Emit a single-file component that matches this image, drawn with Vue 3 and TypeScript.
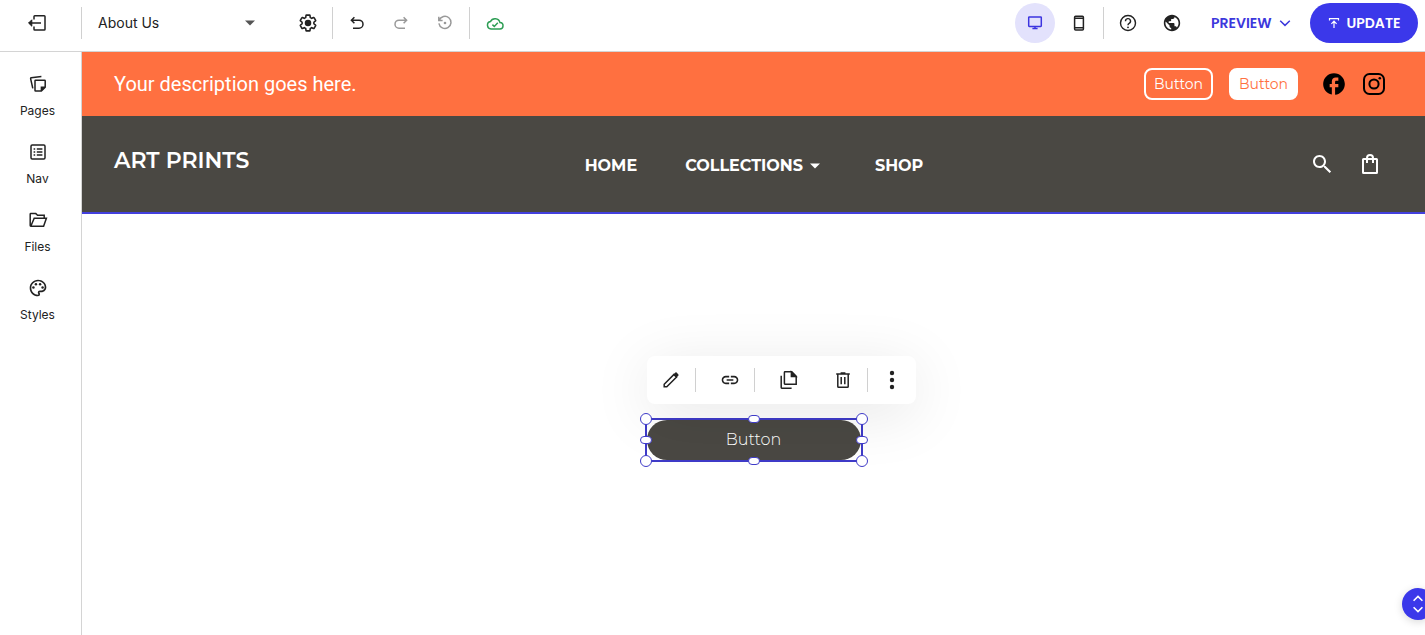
<script setup lang="ts">
import { ref } from 'vue'

type Device = 'desktop' | 'mobile'

const pages: string[] = ['About Us', 'Home', 'Contact']
const page = ref<string>('About Us')
const device = ref<Device>('desktop')
const handles: string[] = ['nw', 'n', 'ne', 'w', 'e', 'sw', 's', 'se']
</script>

<template>
  <div class="editor">
    <header class="topbar">
      <div class="exit">
        <button class="tool" type="button" aria-label="Exit editor">
          <svg width="20" height="20" viewBox="0 0 20 20" class="line">
            <path d="M7 6.4V3.6Q7 2.8 7.8 2.8H17.2Q18 2.8 18 3.6V16.2Q18 17 17.2 17H7.8Q7 17 7 16.2V13.4" />
            <path d="M1.8 10H14" />
            <path d="M4.8 6.8 1.6 10l3.2 3.2z" fill="currentColor" stroke-width="1" />
          </svg>
        </button>
      </div>
      <span class="divider"></span>
      <div class="page-picker">
        <select v-model="page" aria-label="Page">
          <option v-for="name in pages" :key="name">{{ name }}</option>
        </select>
        <svg class="caret" width="12" height="6" viewBox="0 0 12 6"><path d="M1 0.5h10L6 5.5z" fill="#555" /></svg>
      </div>
      <button class="tool settings" type="button" aria-label="Page settings">
        <svg width="20" height="20" viewBox="0 0 24 24">
          <path fill="none" stroke="currentColor" stroke-width="2" transform="translate(0.6 0.6) scale(.95)" d="M19.43 12.98c.04-.32.07-.64.07-.98s-.03-.66-.07-.98l2.11-1.65c.19-.15.24-.42.12-.64l-2-3.46c-.12-.22-.39-.3-.61-.22l-2.49 1c-.52-.4-1.08-.73-1.69-.98l-.38-2.65C14.46 2.18 14.25 2 14 2h-4c-.25 0-.46.18-.49.42l-.38 2.65c-.61.25-1.17.59-1.69.98l-2.49-1c-.23-.09-.49 0-.61.22l-2 3.46c-.13.22-.07.49.12.64l2.11 1.65c-.04.32-.07.65-.07.98s.03.66.07.98l-2.11 1.65c-.19.15-.24.42-.12.64l2 3.46c.12.22.39.3.61.22l2.49-1c.52.4 1.08.73 1.69.98l.38 2.65c.03.24.24.42.49.42h4c.25 0 .46-.18.49-.42l.38-2.65c.61-.25 1.17-.59 1.69-.98l2.49 1c.23.09.49 0 .61-.22l2-3.46c.12-.22.07-.49-.12-.64z" />
          <circle cx="12" cy="12" r="3.9" fill="currentColor" />
        </svg>
      </button>
      <span class="divider"></span>
      <div class="history">
        <button class="tool" type="button" aria-label="Undo">
          <svg width="20" height="20" viewBox="0 0 20 20" class="line">
            <path d="M7.4 4.2 4.4 7.2l3 3M4.6 7.2H12a4 4 0 0 1 0 8H6" />
          </svg>
        </button>
        <button class="tool muted" type="button" aria-label="Redo">
          <svg width="20" height="20" viewBox="0 0 20 20" class="line">
            <path d="M12.6 4.2l3 3-3 3M15.4 7.2H8a4 4 0 0 0 0 8h6" />
          </svg>
        </button>
        <button class="tool muted" type="button" aria-label="Version history">
          <svg width="20" height="20" viewBox="0 0 20 20" class="line">
            <path d="M4.2 7.2A6.1 6.1 0 1 1 3.9 10.4M3.8 3.8v3.6h3.8" />
            <circle cx="10" cy="10" r="1.3" fill="currentColor" stroke="none" />
          </svg>
        </button>
      </div>
      <span class="divider"></span>
      <button class="tool saved" type="button" aria-label="All changes saved">
        <svg width="20" height="20" viewBox="0 0 20 20" class="line">
          <path d="M6 16H14.6A3.2 3.2 0 0 0 15 9.6 5.1 5.1 0 0 0 5.4 8.6 3.75 3.75 0 0 0 6 16Z" />
          <path d="m7.4 11.6 1.9 1.8 3.5-3.6" />
        </svg>
      </button>

      <div class="spacer"></div>

      <button class="device" :class="{ active: device === 'desktop' }" type="button" aria-label="Desktop view" @click="device = 'desktop'">
        <svg width="20" height="20" viewBox="0 0 20 20" class="line">
          <rect x="3.7" y="4" width="12.6" height="9.4" rx="0.6" />
          <path d="M10 13.6v2M7.4 15.4h5.2" />
        </svg>
      </button>
      <button class="device phone" :class="{ active: device === 'mobile' }" type="button" aria-label="Mobile view" @click="device = 'mobile'">
        <svg width="20" height="20" viewBox="0 0 20 20" class="line">
          <rect x="5.6" y="3.2" width="8.8" height="13.8" rx="1" />
          <path d="M6 5.2h8M6 14.8h8" />
        </svg>
      </button>
      <span class="divider"></span>
      <div class="support">
        <button class="tool" type="button" aria-label="Help">
          <svg width="20" height="20" viewBox="0 0 24 24" fill="none" stroke="currentColor" stroke-width="1.7">
            <circle cx="12" cy="12" r="9" />
            <path d="M9 9.8A3 3 0 1 1 13.4 12.4Q12 13.2 12 14.8" />
            <circle cx="12" cy="17.2" r="1.1" fill="currentColor" stroke="none" />
          </svg>
        </button>
        <button class="tool" type="button" aria-label="Language">
          <svg width="18" height="20" viewBox="1 0 22 24" fill="currentColor">
            <path d="M12 2C6.48 2 2 6.48 2 12s4.48 10 10 10 10-4.48 10-10S17.52 2 12 2zm-1 17.93c-3.95-.49-7-3.85-7-7.93 0-.62.08-1.21.21-1.79L9 15v1c0 1.1.9 2 2 2v1.93zm6.9-2.54c-.26-.81-1-1.39-1.9-1.39h-1v-3c0-.55-.45-1-1-1H8v-2h2c.55 0 1-.45 1-1V7h2c1.1 0 2-.9 2-2v-.41c2.93 1.19 5 4.06 5 7.41 0 2.08-.8 3.97-2.1 5.39z" />
          </svg>
        </button>
      </div>
      <button class="preview" type="button">
        PREVIEW
        <svg width="12" height="12" viewBox="0 0 12 12" class="line"><path d="M1.2 3.8 6 8.4l4.8-4.6" /></svg>
      </button>
      <button class="update" type="button">
        <svg width="12" height="12" viewBox="0 0 12 12" fill="none" stroke="#fff" stroke-width="1.2"><path d="M1.5 3.4V1.6h9v1.8M6 11V4.4M3.4 6.8 6 4.2l2.6 2.6" /></svg>
        UPDATE
      </button>
    </header>

    <div class="body">
      <nav class="sidebar" aria-label="Editor">
        <button class="side-item" type="button">
          <svg width="20" height="20" viewBox="0 0 20 20" class="line">
            <path d="M7.6 6.2H16.6Q17.2 6.2 17.2 6.8V13.2L13.4 17H7.6Q7 17 7 16.4V6.8Q7 6.2 7.6 6.2ZM13.4 16.8V13.2H17" />
            <path d="M4.8 14.4 2.6 4.6Q2.5 3.9 3.2 3.7L13.4 2.4" />
            <path d="M13.6 13.4h3.2l-3.2 3.2z" fill="currentColor" stroke="none" />
          </svg>
          Pages
        </button>
        <button class="side-item" type="button">
          <svg width="20" height="20" viewBox="0 0 20 20" class="line">
            <rect x="3" y="3" width="14" height="14" rx="1.2" />
            <path d="M5.6 7h1.6M8.8 7h5.6M5.6 10h1.6M8.8 10h5.6M5.6 13h1.6M8.8 13h5.6" />
          </svg>
          Nav
        </button>
        <button class="side-item" type="button">
          <svg width="20" height="20" viewBox="0 0 20 20" class="line">
            <path d="M16.2 7.4V5.2H9.6L7.8 3.6H2.8Q2.2 3.6 2.2 4.2V15.6Q2.2 16.2 2.8 16.2H15.6L18.4 8.2H6.2L3 15.8" />
          </svg>
          Files
        </button>
        <button class="side-item" type="button">
          <svg width="20" height="20" viewBox="0 0 24 24" fill="currentColor">
            <path d="M12 22C6.49 22 2 17.51 2 12S6.49 2 12 2s10 4.04 10 9c0 3.31-2.69 6-6 6h-1.77c-.28 0-.5.22-.5.5 0 .12.05.23.13.33.41.47.64 1.06.64 1.67A2.5 2.5 0 0 1 12 22zm0-18c-4.41 0-8 3.59-8 8s3.59 8 8 8c.28 0 .5-.22.5-.5a.54.54 0 0 0-.14-.35c-.41-.46-.63-1.05-.63-1.65a2.5 2.5 0 0 1 2.5-2.5H16c2.21 0 4-1.79 4-4 0-3.86-3.59-7-8-7z" />
            <circle cx="6.5" cy="11.5" r="1.5" /><circle cx="9.5" cy="7.5" r="1.5" />
            <circle cx="14.5" cy="7.5" r="1.5" /><circle cx="17.5" cy="11.5" r="1.5" />
          </svg>
          Styles
        </button>
      </nav>

      <main class="site">
        <section class="banner">
          <p>Your description goes here.</p>
          <div class="banner-actions">
            <button class="outlined" type="button">Button</button>
            <button class="filled" type="button">Button</button>
          </div>
          <div class="social">
            <a href="#" aria-label="Facebook">
              <svg width="26" height="26" viewBox="0 0 24 24">
                <path d="M22 12c0-5.52-4.48-10-10-10S2 6.48 2 12c0 4.84 3.44 8.87 8 9.8V15H8v-3h2V9.5C10 7.57 11.57 6 13.5 6H16v3h-2c-.55 0-1 .45-1 1v2h3v3h-3v6.95c5.05-.5 9-4.76 9-9.95z" />
              </svg>
            </a>
            <a href="#" aria-label="Instagram">
              <svg width="26" height="26" viewBox="0 0 26 26" fill="none" stroke="#000" stroke-width="2">
                <rect x="3" y="3" width="20" height="20" rx="5.5" />
                <circle cx="13" cy="13" r="4.6" />
                <circle cx="18.8" cy="7.2" r="1.3" fill="#000" stroke="none" />
              </svg>
            </a>
          </div>
        </section>

        <section class="site-header">
          <a class="brand" href="#">ART PRINTS</a>
          <nav class="menu" aria-label="Site">
            <a href="#">HOME</a>
            <a class="with-caret" href="#">COLLECTIONS
              <svg width="10" height="6" viewBox="0 0 10 6"><path d="M0 0.5h10L5 5.5z" fill="#fff" /></svg>
            </a>
            <a href="#">SHOP</a>
          </nav>
          <div class="site-tools">
            <button class="tool" type="button" aria-label="Search">
              <svg width="24" height="24" viewBox="0 0 24 24" fill="#fff">
                <path d="M15.5 14h-.79l-.28-.27C15.41 12.59 16 11.11 16 9.5 16 5.91 13.09 3 9.5 3S3 5.91 3 9.5 5.91 16 9.5 16c1.61 0 3.09-.59 4.23-1.57l.27.28v.79l5.6 5.6L21.1 19.6l-5.6-5.6zm-6 0C7.01 14 5 11.99 5 9.5S7.01 5 9.5 5 14 7.01 14 9.5 11.99 14 9.5 14z" />
              </svg>
            </button>
            <button class="tool" type="button" aria-label="Shopping bag">
              <svg width="24" height="24" viewBox="0 0 24 24" fill="none" stroke="#fff" stroke-width="2">
                <rect x="5" y="7" width="14" height="14" rx="0.5" />
                <path d="M9 11V6a3 3 0 0 1 6 0v5" />
              </svg>
            </button>
          </div>
        </section>

        <section class="canvas">
          <div class="selection">
            <div class="toolbar" role="toolbar" aria-label="Element actions">
              <button class="tool" type="button" aria-label="Edit">
                <svg width="20" height="20" viewBox="0 0 20 20" class="line">
                  <path d="M3.2 16.8v-2.6L13 4.4l2.6 2.6L5.8 16.8z" />
                  <path d="m12.2 4.8 2.2-2.2q.6-.5 1.2 0l1.8 1.8q.5.6 0 1.2l-2.2 2.2z" fill="currentColor" stroke="none" />
                </svg>
              </button>
              <span class="bar"></span>
              <button class="tool wide" type="button" aria-label="Link">
                <svg width="20" height="20" viewBox="0 0 24 24" fill="currentColor">
                  <path d="M3.9 12c0-1.71 1.39-3.1 3.1-3.1h4V7H7c-2.76 0-5 2.24-5 5s2.24 5 5 5h4v-1.9H7c-1.71 0-3.1-1.39-3.1-3.1zM8 13h8v-2H8v2zm9-6h-4v1.9h4c1.71 0 3.1 1.39 3.1 3.1s-1.39 3.1-3.1 3.1h-4V17h4c2.76 0 5-2.24 5-5s-2.24-5-5-5z" />
                </svg>
              </button>
              <span class="bar"></span>
              <button class="tool copy" type="button" aria-label="Duplicate">
                <svg width="20" height="20" viewBox="0 0 20 20" class="line">
                  <path d="M6 1.8h6.8l4.4 4.4v8H6Q5.4 14.2 5.4 13.6V2.4Q5.4 1.8 6 1.8Z" />
                  <path d="M12.4 2v4.6h4.6z" fill="currentColor" />
                  <path d="M2.2 5.8V17.6Q2.2 18.2 2.8 18.2H12.6" />
                </svg>
              </button>
              <button class="tool bin" type="button" aria-label="Delete">
                <svg width="20" height="20" viewBox="0 0 20 20" class="line">
                  <path d="M3.2 4h13.6M7.6 3h4.8M4.8 4.2v12.2q0 .8.8.8h8.8q.8 0 .8-.8V4.2M8.2 7v7.2M11.8 7v7.2" />
                </svg>
              </button>
              <span class="bar"></span>
              <button class="tool more" type="button" aria-label="More">
                <svg width="20" height="20" viewBox="0 0 20 20" fill="currentColor">
                  <circle cx="10" cy="3" r="2.2" /><circle cx="10" cy="10" r="2.2" /><circle cx="10" cy="17" r="2.2" />
                </svg>
              </button>
            </div>
            <button class="pill" type="button">Button</button>
            <span v-for="spot in handles" :key="spot" class="handle" :class="spot"></span>
          </div>
        </section>
      </main>
    </div>

    <button class="resize" type="button" aria-label="Move section">
      <svg width="20" height="20" viewBox="0 0 20 20" fill="none" stroke="#fff" stroke-width="1.6">
        <path d="m5.6 6.8 4.4-4.4 4.4 4.4M5.6 13.2l4.4 4.4 4.4-4.4" />
      </svg>
    </button>
  </div>
</template>

<style>
body {
  margin: 0;
}
</style>

<style scoped>
.editor {
  position: relative;
  display: flex;
  flex-direction: column;
  min-height: 100vh;
  overflow: hidden;
  background: #fff;
  color: #222;
  font-family: Inter, "Liberation Sans", sans-serif;
}
.editor *,
.editor {
  box-sizing: border-box;
}
button {
  margin: 0;
  padding: 0;
  border: 0;
  background: none;
  color: inherit;
  font-family: inherit;
  cursor: pointer;
}
a {
  color: inherit;
  text-decoration: none;
}
svg {
  display: block;
  flex: none;
}
.line {
  fill: none;
  stroke: currentColor;
  stroke-width: 1.5;
}
.tool {
  display: flex;
  flex: none;
  align-items: center;
  justify-content: center;
}
.muted {
  color: #999;
}

/* Top bar */
.topbar {
  display: flex;
  align-items: center;
  height: 52px;
  padding: 0 7px 5px 0;
  border-bottom: 1px solid #d4d4d4;
}
.exit {
  display: flex;
  width: 81px;
  padding-left: 27px;
}
.divider {
  flex: none;
  width: 1px;
  height: 32px;
  background: #d0d0d0;
}
.page-picker {
  position: relative;
  width: 174px;
  margin-left: 16px;
}
.page-picker select {
  width: 100%;
  height: 32px;
  padding: 0;
  border: 0;
  background: none;
  appearance: none;
  color: #222;
  font: 14px/20px Inter, sans-serif;
}
.caret {
  position: absolute;
  top: 13px;
  right: 16px;
  pointer-events: none;
}
.settings {
  margin: 0 14px 0 26px;
}
.history {
  display: flex;
  gap: 24px;
  padding: 0 14px;
}
.saved {
  margin-left: 15px;
  color: #2e9e55;
}
.spacer {
  flex: 1;
}
.device {
  display: flex;
  flex: none;
  align-items: center;
  justify-content: center;
  width: 40px;
  height: 40px;
  border-radius: 50%;
}
.device.active {
  background: #e3e2fc;
  color: #3c35e0;
}
.phone {
  margin: 0 4px;
}
.support {
  display: flex;
  gap: 25px;
  padding: 0 30px 0 14px;
}
.preview {
  display: flex;
  align-items: center;
  justify-content: space-between;
  width: 80px;
  margin-right: 19px;
  color: #3c38dc;
  font: 600 14px/20px Poppins, Inter, sans-serif;
}
.update {
  display: flex;
  flex: none;
  align-items: center;
  justify-content: center;
  gap: 7px;
  width: 108px;
  height: 40px;
  border-radius: 20px;
  background: #3b38ea;
  color: #fff;
  font: 600 14px/20px Poppins, Inter, sans-serif;
}

/* Sidebar */
.body {
  display: flex;
  flex: 1;
}
.sidebar {
  display: flex;
  flex: none;
  flex-direction: column;
  gap: 23px;
  width: 82px;
  padding: 22px 6px 0 0;
  border-right: 1px solid #d4d4d4;
}
.side-item {
  display: flex;
  flex-direction: column;
  align-items: center;
  gap: 9px;
  font-size: 12px;
  line-height: 16px;
}

/* Site */
.site {
  display: flex;
  flex: 1;
  flex-direction: column;
  min-width: 0;
}
.banner {
  display: flex;
  align-items: center;
  height: 64px;
  padding: 0 38px 0 32px;
  background: #ff7040;
  color: #fff;
}
.banner p {
  flex: 1;
  margin: 0;
  font: 20px/24px Roboto, sans-serif;
}
.banner-actions {
  display: flex;
  gap: 16px;
  margin-right: 23px;
}
.banner-actions button {
  width: 69px;
  height: 32px;
  border: 2px solid #fff;
  border-radius: 8px;
  font: 400 14px/20px Montserrat, Inter, sans-serif;
}
.banner-actions .filled {
  background: #fff;
  color: #ff7040;
}
.social {
  display: flex;
  gap: 14px;
}
.site-header {
  display: grid;
  grid-template-columns: 1fr auto 1fr;
  align-items: center;
  height: 98px;
  padding: 0 43px 0 32px;
  border-bottom: 2px solid #4340dd;
  background: #4a4843;
  color: #fff;
}
.brand {
  padding-bottom: 7px;
  font: 600 22px/28px Montserrat, Inter, sans-serif;
}
.menu {
  display: flex;
  gap: 48px;
  margin-left: 12px;
  padding-top: 4px;
  font: 700 16px/24px Montserrat, Inter, sans-serif;
}
.with-caret {
  display: flex;
  align-items: center;
  gap: 7px;
  padding-right: 7px;
}
.site-tools {
  display: flex;
  justify-content: flex-end;
  gap: 24px;
}

/* Selected element */
.canvas {
  display: flex;
  flex: 1;
  align-items: flex-start;
  justify-content: center;
  padding-top: 204px;
}
.selection {
  position: relative;
  width: 218px;
  height: 44px;
  border: 2px solid #3f3bc8;
}
.pill {
  width: 100%;
  height: 100%;
  border-radius: 20px;
  background: #4a4843;
  color: #fff;
  font: 300 16px/24px Montserrat, Inter, sans-serif;
}
.toolbar {
  position: absolute;
  bottom: 56px;
  left: 0;
  display: flex;
  align-items: center;
  width: 269px;
  height: 48px;
  padding-left: 14px;
  border-radius: 8px;
  background: #fff;
  box-shadow: 0 10px 60px rgba(0, 0, 0, 0.1);
}
.bar {
  flex: none;
  width: 1px;
  height: 24px;
  margin-left: 14px;
  background: #d0d0d0;
}
.wide,
.copy {
  margin-left: 24px;
}
.bin {
  margin-left: 34px;
}
.more {
  margin-left: 14px;
}
.handle {
  position: absolute;
  width: 12px;
  height: 12px;
  border: 1px solid #3f3bc8;
  border-radius: 6px;
  background: #fff;
  transform: translate(-50%, -50%);
}
.n,
.s,
.e,
.w {
  height: 8px;
}
.nw,
.n,
.ne {
  top: -1px;
}
.sw,
.s,
.se {
  top: calc(100% + 1px);
}
.e,
.w {
  top: 50%;
}
.nw,
.w,
.sw {
  left: -1px;
}
.n,
.s {
  left: 50%;
}
.ne,
.e,
.se {
  left: calc(100% + 1px);
}
.resize {
  position: absolute;
  right: -9px;
  bottom: 15px;
  display: flex;
  align-items: center;
  justify-content: center;
  width: 32px;
  height: 32px;
  border-radius: 50%;
  background: #3b38ea;
  box-shadow: 0 2px 8px rgba(0, 0, 0, 0.15);
}
</style>
